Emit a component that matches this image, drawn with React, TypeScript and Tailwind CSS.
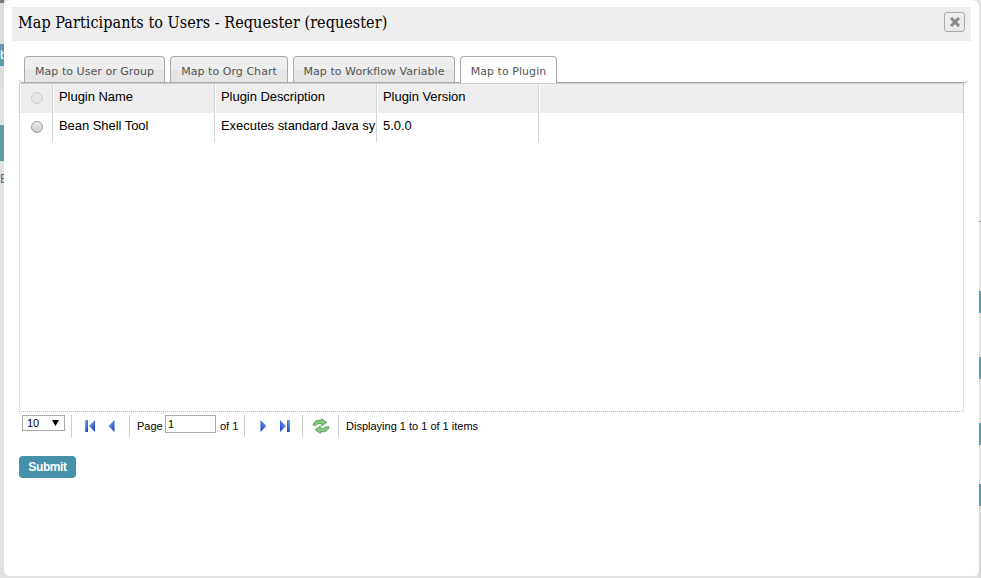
import React from 'react';

const tabs = [
  { label: 'Map to User or Group', size: 'w-[141px]' },
  { label: 'Map to Org Chart', size: 'w-[118px]' },
  { label: 'Map to Workflow Variable', size: 'w-[162px]' },
  { label: 'Map to Plugin', size: 'w-[97px]', active: true },
];

function Row({ cells, header }: { cells: string[]; header?: boolean }) {
  return (
    <div className={`flex h-[29px] ${header ? 'bg-[#eee] shadow-[inset_1px_0_0_#fff]' : ''}`}>
      <div className="flex w-[33px] shrink-0 justify-center border-r border-[#d5d5d5] pt-[8px] pl-[2px]">
        <span
          className={`h-3 w-3 rounded-full border ${
            header
              ? 'border-[#cfcfcf] bg-[#e6e6e6]'
              : 'border-[#999] bg-linear-to-b from-[#eee] to-[#ccc]'
          }`}
        />
      </div>
      {cells.map((c) => (
        <div
          key={c}
          className={`w-[162px] shrink-0 overflow-hidden border-r border-[#d5d5d5] pl-[6px] text-[13px] leading-[26px] tracking-[-0.05px] whitespace-nowrap text-black ${
            header ? 'shadow-[inset_1px_0_0_#fff]' : ''
          }`}
        >
          {c}
        </div>
      ))}
      {header && <div className="w-px bg-white" />}
    </div>
  );
}

function Arrow({ kind }: { kind: 'first' | 'prev' | 'next' | 'last' }) {
  const bar = kind === 'first' || kind === 'last';
  const flip = kind === 'next' || kind === 'last';
  return (
    <svg width="12" height="12" viewBox="0 0 12 12" className={flip ? '-scale-x-100' : ''}>
      <defs>
        <linearGradient id={`g-${kind}`} x1="0" y1="0" x2="1" y2="1">
          <stop offset="0" stopColor="#8db6f5" />
          <stop offset="1" stopColor="#0b35bd" />
        </linearGradient>
      </defs>
      {bar && <rect x="1" y="0" width="3" height="12" fill={`url(#g-${kind})`} />}
      <path d={bar ? 'M11 0V12L5 6Z' : 'M8.5 0V12L2.5 6Z'} fill={`url(#g-${kind})`} />
    </svg>
  );
}

function Refresh() {
  return (
    <svg width="18" height="16" viewBox="0 0 18 16" fill="#86c783" stroke="#4c9a4a" strokeWidth=".8" strokeLinejoin="round">
      <path d="M1 7.2C1.6 3.4 5 1.5 9.6 2.3V.6L14.8 4.4L9.6 7.8V5.8C7 5 5.2 5.6 4.2 7.2Z" />
      <path d="M17 8.8C16.4 12.6 13 14.5 8.4 13.7V15.4L3.2 11.6L8.4 8.2V10.2C11 11 12.8 10.4 13.8 8.8Z" />
    </svg>
  );
}

function Separator() {
  return <div className="h-[22px] w-px shrink-0 bg-[#ccc]" />;
}

export default function App() {
  return (
    <div className="flex h-[578px] w-[981px] overflow-hidden bg-[#e0e2e1] font-['Liberation_Sans',Arial,sans-serif]">
      <div className="h-full w-1 shrink-0 overflow-hidden bg-[#e0e2e1]">
        <div className="h-[3px] bg-[#777b77]" />
        <div className="h-[41px] bg-[#d9dddb]" />
        <div className="h-[22px] bg-[#6199a9] text-[13px] leading-[21px] text-white">b</div>
        <div className="h-[22px] bg-[#d9dddb]" />
        <div className="h-[37px]" />
        <div className="h-[36px] bg-[#6199a9]" />
        <div className="mt-[8px] h-5 text-[13px] leading-5 text-[#666]">E</div>
      </div>

      <div className="flex h-[576px] w-[975px] shrink-0 flex-col rounded-[6px] bg-white pt-[7px]">
        <div className="mx-2 flex h-[34px] items-start justify-between bg-[#eee] pr-[6px] pl-[6px]">
          <h1 className="pt-px font-['DejaVu_Serif_Condensed','DejaVu_Serif',serif] text-[16px] leading-[29px] tracking-[0.06px] whitespace-nowrap text-black">
            Map Participants to Users - Requester (requester)
          </h1>
          <button className="mt-[5px] flex h-5 w-[21px] items-center justify-center rounded-[3px] border border-[#aaa] bg-linear-to-b from-[#f0f0f0] to-[#e8e8e8]">
            <svg width="10" height="10" viewBox="0 0 10 10" stroke="#888" strokeWidth="3">
              <path d="M1 1L9 9M9 1L1 9" />
            </svg>
          </button>
        </div>

        <div className="ml-[15px] flex h-[42px] w-[949px] items-end gap-[5px] rounded-b-[4px] border-b border-[#aaa] pl-[5px]">
          {tabs.map((t) => (
            <div
              key={t.label}
              className={`${t.size} shrink-0 rounded-t-[4px] border border-b-0 border-[#aaa] text-center font-['DejaVu_Sans',Verdana,sans-serif] text-[11px] leading-[29px] tracking-[0.05px] whitespace-nowrap text-[#555] ${
                t.active ? '-mb-px h-[27px] bg-white' : 'h-[26px] bg-linear-to-b from-[#eee] from-50% to-[#e5e5e5] to-50%'
              }`}
            >
              {t.label}
            </div>
          ))}
        </div>

        <div className="ml-[15px] h-[329px] w-[945px] border-x border-b border-dotted border-[#bbb]">
          <div className="-mx-px border-x border-t border-[#ccc]">
            <Row header cells={['Plugin Name', 'Plugin Description', 'Plugin Version']} />
          </div>
          <Row cells={['Bean Shell Tool', 'Executes standard Java sy', '5.0.0']} />
        </div>

        <div className="ml-[18px] flex h-[34px] items-start pt-[3px] text-[11px] leading-[22px] text-black">
          <div className="flex h-4 w-[43px] items-center justify-between border border-[#aaa] pr-[5px] pl-1 leading-[14px]">
            10
            <svg width="7" height="6" viewBox="0 0 7 6">
              <path d="M0 0H7L3.5 6Z" fill="#000" />
            </svg>
          </div>
          <div className="flex items-center pl-[6px]">
            <Separator />
            <div className="flex w-[57px] gap-[10px] pl-3">
              <Arrow kind="first" />
              <Arrow kind="prev" />
            </div>
            <Separator />
            <span className="w-[35px] pl-[7px]">Page</span>
            <div className="mb-1 h-[18px] w-[51px] border border-[#aaa] pl-[2px] leading-4">1</div>
            <span className="w-[28px] pl-1 whitespace-nowrap">of 1</span>
            <Separator />
            <div className="flex w-[57px] gap-[10px] pl-3">
              <Arrow kind="next" />
              <Arrow kind="last" />
            </div>
            <Separator />
            <div className="w-[35px] pl-[9px]"><Refresh /></div>
            <Separator />
            <span className="pl-[7px] whitespace-nowrap">Displaying 1 to 1 of 1 items</span>
          </div>
        </div>

        <button className="mt-[10px] ml-[15px] h-[22px] w-[57px] rounded-[4px] bg-[#4491a9] text-[12px] leading-[22px] font-bold tracking-[-0.4px] text-white">
          Submit
        </button>
      </div>

      <div className="flex h-full w-0.5 shrink-0 flex-col bg-[#e4e4e3]">
        <div className="mt-[221px] h-px bg-[#999]" />
        <div className="mt-[69px] h-[22px] bg-[#6199a9]" />
        <div className="mt-[44px] h-[22px] bg-[#6199a9]" />
        <div className="mt-[44px] h-[22px] bg-[#6199a9]" />
        <div className="h-[39px]" />
        <div className="h-[22px] bg-[#6199a9]" />
        <div className="flex-1 bg-[#d8d8d8]" />
      </div>
    </div>
  );
}
